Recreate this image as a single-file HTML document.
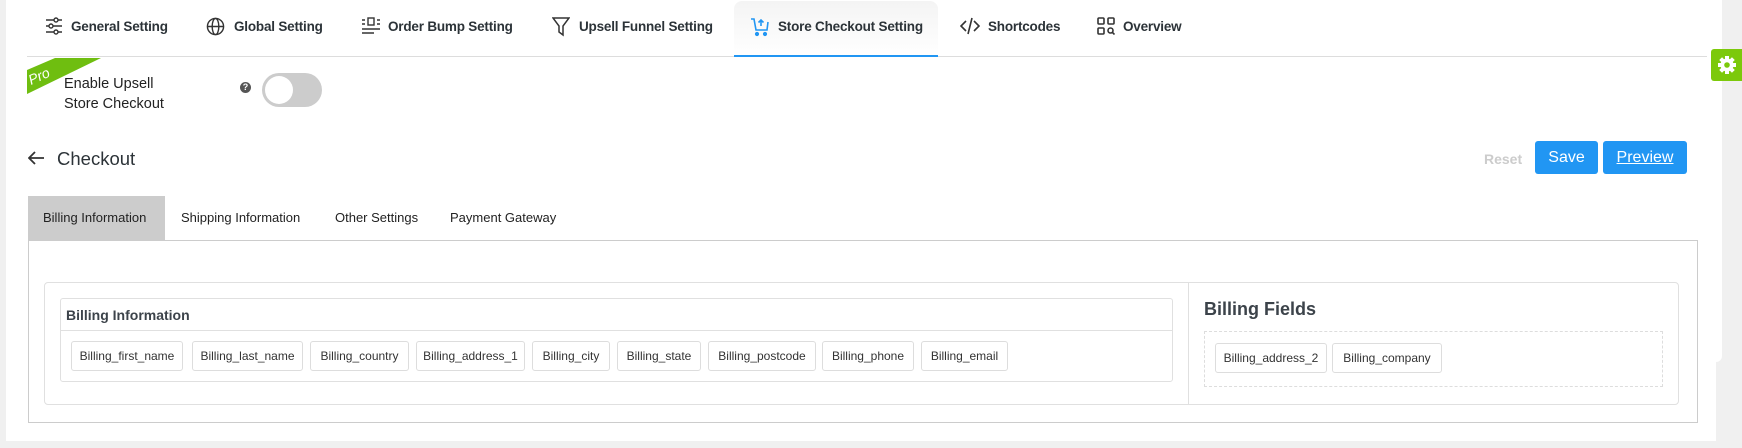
<!DOCTYPE html>
<html><head><meta charset="utf-8"><style>
*{box-sizing:border-box;margin:0;padding:0}
body{width:1742px;height:448px;background:#f0f0f0;position:relative;overflow:hidden;font-family:"Liberation Sans",sans-serif;color:#2c3338}
.a{position:absolute}
.nav{top:19px;font-size:13.5px;font-weight:bold;color:#2c3338;white-space:nowrap;letter-spacing:-0.2px}
.ic{position:absolute;top:17px}
.tab{top:210px;font-size:13px;color:#222}
.chip{position:absolute;top:341px;height:30px;border:1px solid #ddd;border-radius:3px;font-size:12px;color:#333;text-align:center;line-height:28px;background:#fff;letter-spacing:0}
</style></head><body>
<div class="a" style="left:6px;top:0;width:1716px;height:362px;background:#fff;border-bottom-right-radius:6px"></div>
<div class="a" style="left:6px;top:340px;width:1710px;height:101px;background:#fff"></div>
<div class="a" style="left:734px;top:1px;width:204px;height:56px;background:linear-gradient(#f4f4f4,#fff);border-radius:8px 8px 0 0"></div>
<div class="a" style="left:27px;top:56px;width:1680px;height:1px;background:#ddd"></div>
<div class="a" style="left:734px;top:55px;width:204px;height:2px;background:#2196f3"></div>
<svg class="ic" style="left:45px" width="18" height="18" viewBox="0 0 18 18" fill="none" stroke="#333" stroke-width="1.4"><path d="M1 3h16M1 9h16M1 15h16"/><circle cx="11" cy="3" r="2" fill="#fff"/><circle cx="6" cy="9" r="2" fill="#fff"/><circle cx="11" cy="15" r="2" fill="#fff"/></svg>
<div class="a nav" style="left:71px">General Setting</div>
<svg class="ic" style="left:206px" width="19" height="19" viewBox="0 0 20 20" fill="none" stroke="#333" stroke-width="1.5"><circle cx="10" cy="10" r="8.5"/><ellipse cx="10" cy="10" rx="3.5" ry="8.5"/><path d="M1.5 10h17"/></svg>
<div class="a nav" style="left:234px">Global Setting</div>
<svg class="ic" style="left:361px" width="20" height="18" viewBox="0 0 20 18" fill="none" stroke="#333" stroke-width="1.4"><path d="M1 3h3M1 7h3M16 3h3M16 7h3M1 12h18M1 16h12"/><rect x="7" y="1" width="6" height="7"/></svg>
<div class="a nav" style="left:388px">Order Bump Setting</div>
<svg class="ic" style="left:552px" width="18" height="20" viewBox="0 0 18 20" fill="none" stroke="#333" stroke-width="1.5"><path d="M1 1h16l-6 8v9l-4-3V9z"/></svg>
<div class="a nav" style="left:579px">Upsell Funnel Setting</div>
<svg class="ic" style="left:750px" width="20" height="20" viewBox="0 0 20 20" fill="none" stroke="#2196f3" stroke-width="1.6"><path d="M1 2h3l2 11h11l1-8"/><path d="M11 9V3M8.5 5.5L11 3l2.5 2.5"/><circle cx="7" cy="17" r="1.3" fill="#2196f3"/><circle cx="15" cy="17" r="1.3" fill="#2196f3"/></svg>
<div class="a nav" style="left:778px">Store Checkout Setting</div>
<svg class="ic" style="left:960px" width="20" height="18" viewBox="0 0 20 18" fill="none" stroke="#333" stroke-width="1.6"><path d="M6 4L1 9l5 5M14 4l5 5-5 5M12 1L8 17"/></svg>
<div class="a nav" style="left:988px">Shortcodes</div>
<svg class="ic" style="left:1097px" width="18" height="18" viewBox="0 0 18 18" fill="none" stroke="#333" stroke-width="1.6"><rect x="1" y="1" width="6" height="6" rx="1"/><rect x="11" y="1" width="6" height="6" rx="1"/><rect x="1" y="11" width="6" height="6" rx="1"/><circle cx="13.5" cy="13.5" r="2.5"/><path d="M15.5 15.5l2 2"/></svg>
<div class="a nav" style="left:1123px">Overview</div>
<div class="a" style="left:1711px;top:49px;width:31px;height:32px;background:#7cc90b;border-radius:3px 0 0 3px"></div>
<svg class="a" style="left:1717px;top:55px" width="20" height="20" viewBox="0 0 20 20"><g fill="#fff"><circle cx="10" cy="10" r="6.5"/><rect x="8" y="1" width="4" height="18"/><rect x="1" y="8" width="18" height="4"/><rect x="8" y="1" width="4" height="18" transform="rotate(45 10 10)"/><rect x="8" y="1" width="4" height="18" transform="rotate(-45 10 10)"/></g><circle cx="10" cy="10" r="2.8" fill="#7cc90b"/></svg>
<svg class="a" style="left:27px;top:58px" width="74" height="36" viewBox="0 0 74 36"><path d="M0 12L28 0h46L0 36z" fill="#6fbe10"/><text x="4" y="27" transform="rotate(-24 4 27)" font-family="Liberation Sans" font-style="italic" font-size="14" fill="#fff">Pro</text></svg>
<div class="a" style="left:64px;top:74px;font-size:14.5px;line-height:20px;color:#222">Enable Upsell<br>Store Checkout</div>
<div class="a" style="left:240px;top:82px;width:11px;height:11px;border-radius:50%;background:#555;color:#fff;font-size:9px;font-weight:bold;text-align:center;line-height:11px">?</div>
<div class="a" style="left:262px;top:73px;width:60px;height:34px;border-radius:17px;background:#ccc"></div>
<div class="a" style="left:265px;top:76px;width:28px;height:28px;border-radius:50%;background:#fff"></div>
<svg class="a" style="left:28px;top:151px" width="17" height="14" viewBox="0 0 17 14" fill="none" stroke="#333" stroke-width="1.8"><path d="M16 7H2M7 1L1 7l6 6"/></svg>
<div class="a" style="left:57px;top:148px;font-size:18.5px;color:#2c3338">Checkout</div>
<div class="a" style="left:1484px;top:151px;font-size:14px;font-weight:bold;color:#ccc">Reset</div>
<div class="a" style="left:1535px;top:141px;width:63px;height:33px;background:#2196f3;border-radius:3px;color:#fff;font-size:16px;text-align:center;line-height:33px">Save</div>
<div class="a" style="left:1603px;top:141px;width:84px;height:33px;background:#2196f3;border-radius:3px;color:#fff;font-size:16px;text-align:center;line-height:33px;text-decoration:underline">Preview</div>
<div class="a" style="left:28px;top:196px;width:137px;height:45px;background:#ccc"></div>
<div class="a tab" style="left:43px">Billing Information</div>
<div class="a tab" style="left:181px">Shipping Information</div>
<div class="a tab" style="left:335px">Other Settings</div>
<div class="a tab" style="left:450px">Payment Gateway</div>
<div class="a" style="left:28px;top:240px;width:1670px;height:183px;border:1px solid #ccc"></div>
<div class="a" style="left:44px;top:282px;width:1635px;height:123px;border:1px solid #e0e0e0;border-radius:4px"></div>
<div class="a" style="left:1188px;top:282px;width:1px;height:123px;background:#e0e0e0"></div>
<div class="a" style="left:60px;top:298px;width:1113px;height:84px;border:1px solid #e0e0e0;border-radius:3px"></div>
<div class="a" style="left:60px;top:330px;width:1113px;height:1px;background:#e0e0e0"></div>
<div class="a" style="left:66px;top:307px;font-size:14px;font-weight:bold;color:#3c434a">Billing Information</div>
<div class="chip" style="left:71px;width:112px">Billing_first_name</div>
<div class="chip" style="left:192px;width:111px">Billing_last_name</div>
<div class="chip" style="left:310px;width:99px">Billing_country</div>
<div class="chip" style="left:416px;width:109px">Billing_address_1</div>
<div class="chip" style="left:532px;width:78px">Billing_city</div>
<div class="chip" style="left:617px;width:84px">Billing_state</div>
<div class="chip" style="left:708px;width:108px">Billing_postcode</div>
<div class="chip" style="left:822px;width:92px">Billing_phone</div>
<div class="chip" style="left:921px;width:87px">Billing_email</div>
<div class="a" style="left:1204px;top:299px;font-size:18px;font-weight:bold;color:#3c434a">Billing Fields</div>
<div class="a" style="left:1204px;top:331px;width:459px;height:56px;border:1px dashed #ddd"></div>
<div class="chip" style="left:1215px;top:343px;width:112px">Billing_address_2</div>
<div class="chip" style="left:1332px;top:343px;width:110px">Billing_company</div>
</body></html>
